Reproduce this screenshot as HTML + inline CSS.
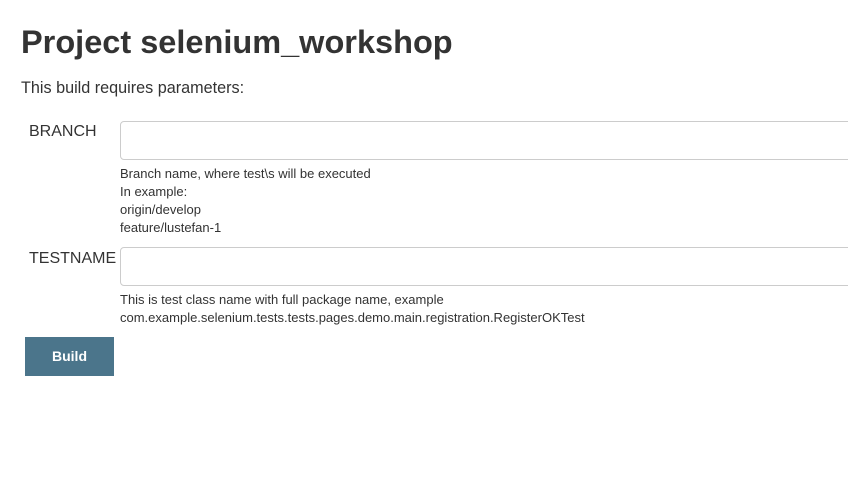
<!DOCTYPE html>
<html><head><style>
body{margin:0;width:848px;height:490px;background:#fff;font-family:"Liberation Sans",sans-serif;color:#333;overflow:hidden;position:relative}
h1{position:absolute;left:21px;top:24px;margin:0;font-size:32.5px;font-weight:bold;color:#333}
.p{position:absolute;left:21px;top:79px;font-size:16.2px}
.lab{position:absolute;font-size:16px}
.inp{position:absolute;left:120px;width:740px;border:1px solid #ccc;border-radius:4px;background:#fff}
.d{position:absolute;left:120px;font-size:13px;line-height:18px}
.btn{position:absolute;left:25px;top:337px;width:89px;height:39px;background:#4b758b;color:#fff;font-weight:bold;font-size:14px;text-align:center;line-height:39px}
</style></head><body>
<h1>Project selenium_workshop</h1>
<div class="p">This build requires parameters:</div>
<div class="lab" style="left:29px;top:123px">BRANCH</div>
<div class="inp" style="top:121px;height:37px"></div>
<div class="d" style="top:165px">Branch name, where test\s will be executed<br>In example:<br>origin/develop<br>feature/lustefan-1</div>
<div class="lab" style="left:29px;top:250px">TESTNAME</div>
<div class="inp" style="top:247px;height:37px"></div>
<div class="d" style="top:291px">This is test class name with full package name, example<br>com.example.selenium.tests.tests.pages.demo.main.registration.RegisterOKTest</div>
<div class="btn">Build</div>
</body></html>
